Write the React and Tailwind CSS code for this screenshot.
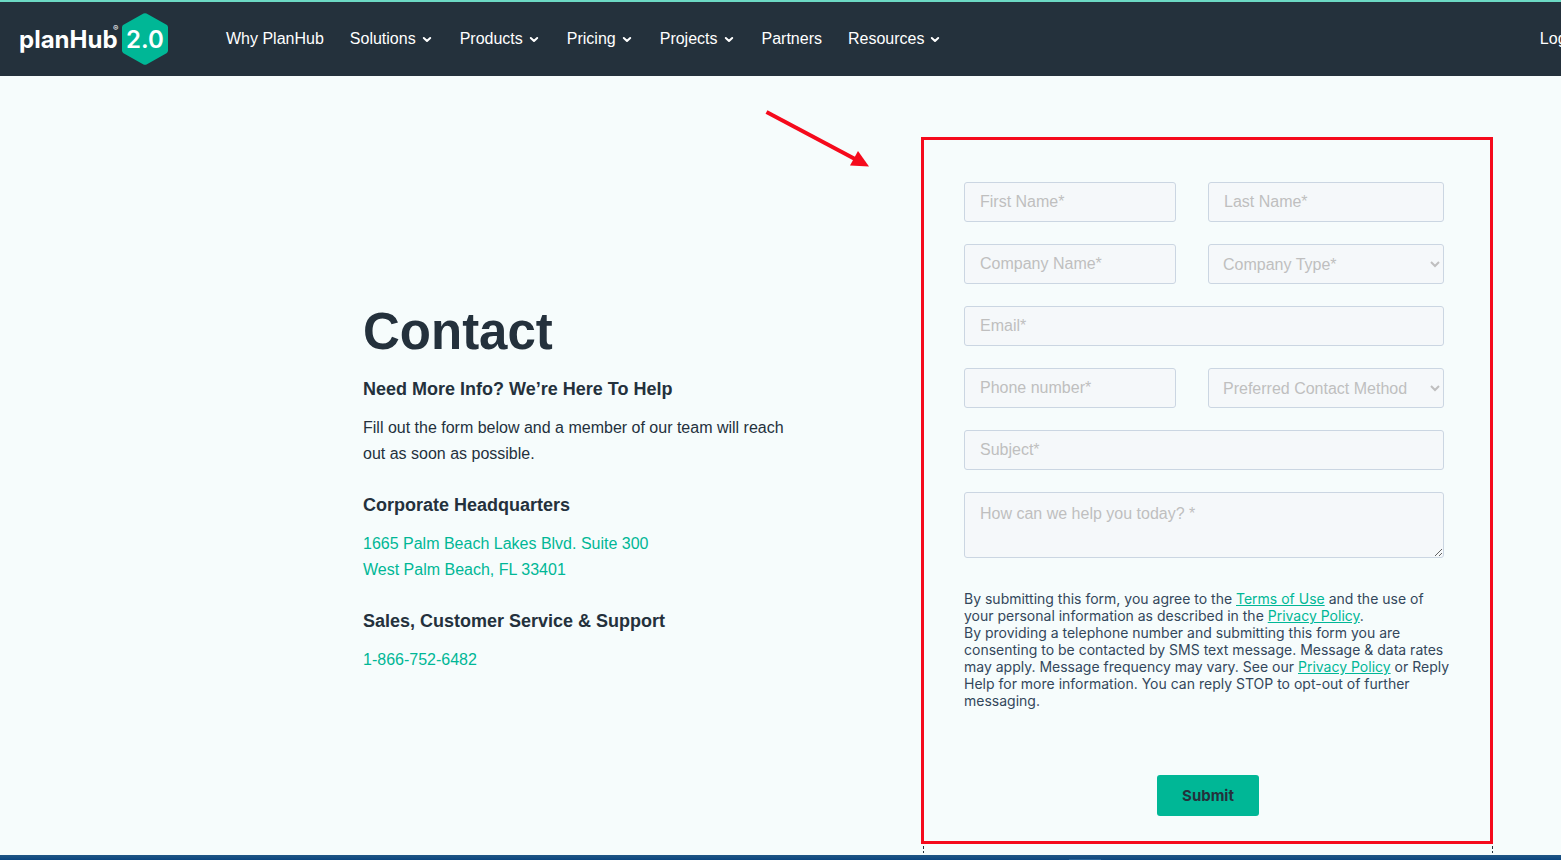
import { useState } from "react";

const navItems = [
  { label: "Why PlanHub", menu: false },
  { label: "Solutions", menu: true },
  { label: "Products", menu: true },
  { label: "Pricing", menu: true },
  { label: "Projects", menu: true },
  { label: "Partners", menu: false },
  { label: "Resources", menu: true },
];

const fieldClass =
  "block w-full rounded-[3px] border border-[#cbd6e2] bg-[#f5f8fa] text-base text-[#33475b] placeholder:text-[#bfbfbf] placeholder:opacity-100";
const inputClass = `${fieldClass} h-10 px-[15px]`;
const selectClass = `${fieldClass} h-10 px-2.5`;
const linkClass = "text-[#00b796] underline";

function Logo() {
  return (
    <a href="#" aria-label="planHub 2.0" className="shrink-0">
      <svg width="150" height="54" viewBox="0 0 150 54" className="block">
        <text x="0" y="36" fill="#fff" fontFamily="Inter, sans-serif" fontSize="24" fontWeight="700">planHub</text>
        <text x="94" y="19" fill="#fff" fontFamily="Inter, sans-serif" fontSize="8">®</text>
        <path
          d="M124.5 1.600a3 3 0 0 1 3 0l20 11.200a3 3 0 0 1 1.500 2.600v23.200a3 3 0 0 1-1.500 2.600l-20 11.200a3 3 0 0 1-3 0l-20-11.200a3 3 0 0 1-1.500-2.600V15.400a3 3 0 0 1 1.500-2.600z"
          fill="#00b796"
        />
        <text x="126" y="36" fill="#fff" fontFamily="Inter, sans-serif" fontSize="24" fontWeight="600" textAnchor="middle">2.0</text>
      </svg>
    </a>
  );
}

function Chevron() {
  return (
    <svg width="12" height="12" viewBox="0 0 12 12" className="mt-0.5 block" aria-hidden="true">
      <path d="M1.800 4 5 7l3.200-3" fill="none" stroke="#fff" strokeWidth="2" strokeLinecap="round" strokeLinejoin="round" />
    </svg>
  );
}

function Header() {
  return (
    <header className="overflow-hidden border-t-2 border-[#6cd9c4] bg-[#24313c]">
      <div className="-mr-[18px] flex h-[74px] items-center whitespace-nowrap pl-[19px] text-base text-white">
        <Logo />
        <nav className="ml-[57px] flex gap-[26px]">
          {navItems.map((item) => (
            <a key={item.label} href="#" className="flex items-center gap-1.5">
              {item.label}
              {item.menu && <Chevron />}
            </a>
          ))}
        </nav>
        <a href="#" className="ml-auto">Login</a>
      </div>
    </header>
  );
}

function ContactInfo() {
  return (
    <section className="min-w-0 flex-1 pb-1 pl-[363px] text-[#24313c]">
      <div className="max-w-[440px]">
        <h1 className="mb-4 text-[51px] font-bold leading-[56px]">Contact</h1>
        <h2 className="mb-[13px] text-lg font-bold leading-[26px]">Need More Info? We’re Here To Help</h2>
        <p className="mb-[25px] leading-[26px]">
          Fill out the form below and a member of our team will reach out as soon as possible.
        </p>
        <h2 className="mb-[13px] text-lg font-bold leading-[26px]">Corporate Headquarters</h2>
        <a href="#" className="mb-[25px] block leading-[26px] text-[#00b796]">
          1665 Palm Beach Lakes Blvd. Suite 300
          <br />
          West Palm Beach, FL 33401
        </a>
        <h2 className="mb-[13px] text-lg font-bold leading-[26px]">Sales, Customer Service &amp; Support</h2>
        <a href="#" className="block leading-[26px] text-[#00b796]">1-866-752-6482</a>
      </div>
    </section>
  );
}

function ContactForm() {
  const [companyType, setCompanyType] = useState("");
  const [method, setMethod] = useState("");

  return (
    <form
      onSubmit={(e) => e.preventDefault()}
      className="border-[3px] border-[#f50a1c] pt-[42px] pr-[38px] pb-[25px] pl-10"
    >
      <div className="grid grid-cols-[212fr_236fr] gap-x-8 gap-y-[22px] pr-2">
        <input type="text" aria-label="First Name" placeholder="First Name*" className={inputClass} />
        <input type="text" aria-label="Last Name" placeholder="Last Name*" className={inputClass} />
        <input type="text" aria-label="Company Name" placeholder="Company Name*" className={inputClass} />
        <select
          aria-label="Company Type"
          value={companyType}
          onChange={(e) => setCompanyType(e.target.value)}
          className={`${selectClass} ${companyType ? "" : "text-[#bfbfbf]"}`}
        >
          <option value="">Company Type*</option>
          <option value="gc">General Contractor</option>
          <option value="sub">Subcontractor</option>
          <option value="supplier">Supplier</option>
        </select>
        <input type="email" aria-label="Email" placeholder="Email*" className={`${inputClass} col-span-2`} />
        <input type="tel" aria-label="Phone number" placeholder="Phone number*" className={inputClass} />
        <select
          aria-label="Preferred Contact Method"
          value={method}
          onChange={(e) => setMethod(e.target.value)}
          className={`${selectClass} ${method ? "" : "text-[#bfbfbf]"}`}
        >
          <option value="">Preferred Contact Method</option>
          <option value="email">Email</option>
          <option value="phone">Phone</option>
        </select>
        <input type="text" aria-label="Subject" placeholder="Subject*" className={`${inputClass} col-span-2`} />
        <textarea
          aria-label="How can we help you today?"
          placeholder="How can we help you today? *"
          className={`${fieldClass} col-span-2 h-[66px] px-[15px] py-[9px]`}
        />
      </div>

      <p className="mt-8 font-['Inter',sans-serif] text-sm leading-[17px] text-[#33475b]">
        By submitting this form, you agree to the <a href="#" className={linkClass}>Terms of Use</a> and the use of
        your personal information as described in the <a href="#" className={linkClass}>Privacy Policy</a>.
        <br />
        By providing a telephone number and submitting this form you are consenting to be contacted by SMS text
        message. Message &amp; data rates may apply. Message frequency may vary. See our{" "}
        <a href="#" className={linkClass}>Privacy Policy</a> or Reply Help for more information. You can reply STOP
        to opt-out of further messaging.
      </p>

      <button
        type="submit"
        className="mx-auto mt-[66px] block h-[41px] w-[102px] rounded-[3px] bg-[#00b796] pt-0.5 font-['Inter',sans-serif] text-[15px] font-bold text-[#24313c]"
      >
        Submit
      </button>
    </form>
  );
}

function App() {
  return (
    <div className="relative flex min-h-screen flex-col overflow-hidden bg-[#f6fcfc] font-['Liberation_Sans',Arial,sans-serif]">
      <Header />

      <main className="flex flex-1 items-center pt-[61px] pr-[68px]">
        <ContactInfo />
        <div className="w-[572px] shrink-0 self-start">
          <ContactForm />
        </div>
      </main>

      {/* continuation of the dashed guide under the form */}
      <div className="mr-[68px] ml-auto flex h-[11px] w-[570px] justify-between py-0.5">
        <span className="w-px bg-[repeating-linear-gradient(#24313c_0_3px,transparent_3px_5px)]" />
        <span className="w-px bg-[repeating-linear-gradient(#24313c_0_3px,transparent_3px_5px)]" />
      </div>

      <footer className="flex h-[5px] items-end bg-linear-to-b from-[#1f5684] to-[#0b4681] pl-[1069px]">
        <span className="h-px w-8 bg-[#2b669b]" />
      </footer>

      {/* arrow pointing at the form */}
      <svg
        width="104"
        height="58"
        viewBox="0 0 104 58"
        className="pointer-events-none absolute top-[110px] left-[765px]"
        aria-hidden="true"
      >
        <path d="M1.500 2 90 49" stroke="#f50a1c" strokeWidth="4" />
        <path d="M93 41 104 56.500 85 55.500z" fill="#f50a1c" />
      </svg>
    </div>
  );
}

export default App;
